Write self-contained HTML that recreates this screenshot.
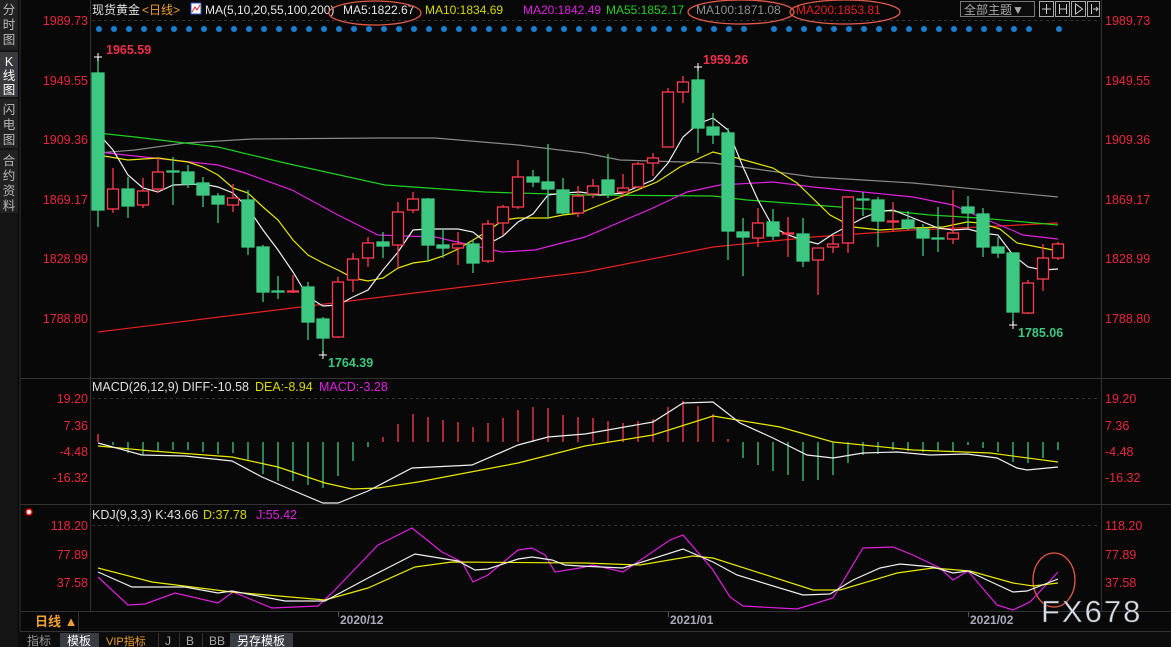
<!DOCTYPE html>
<html><head><meta charset="utf-8"><style>
html,body{margin:0;padding:0;background:#080808;width:1171px;height:647px;overflow:hidden}
svg{display:block}
text{font-family:"Liberation Sans","Noto Sans CJK SC",sans-serif}
</style></head><body>
<svg width="1171" height="647" viewBox="0 0 1171 647" xmlns="http://www.w3.org/2000/svg">
<rect width="1171" height="647" fill="#080808"/>
<rect x="0" y="0" width="18" height="647" fill="#141414"/>
<rect x="0" y="0" width="18" height="50" fill="#222"/>
<rect x="0" y="52" width="18" height="45" fill="#3a3a3e"/>
<rect x="0" y="99" width="18" height="49" fill="#222"/>
<rect x="0" y="150" width="18" height="63" fill="#222"/>
<g fill="#b8b8b8" font-size="12.5" text-anchor="middle">
<text x="9" y="14">分</text><text x="9" y="29">时</text><text x="9" y="44">图</text>
<text x="9" y="66" fill="#fff">K</text><text x="9" y="80" fill="#fff">线</text><text x="9" y="94" fill="#fff">图</text>
<text x="9" y="114">闪</text><text x="9" y="129">电</text><text x="9" y="144">图</text>
<text x="9" y="165">合</text><text x="9" y="180">约</text><text x="9" y="195">资</text><text x="9" y="210">料</text>
</g>
<g stroke="#333" stroke-width="1">
<line x1="20" y1="0" x2="20" y2="631"/>
<line x1="90.5" y1="0" x2="90.5" y2="611"/>
<line x1="1101.5" y1="0" x2="1101.5" y2="611"/>
<line x1="20" y1="378.5" x2="1171" y2="378.5"/>
<line x1="20" y1="504.5" x2="1171" y2="504.5"/>
<line x1="20" y1="611.5" x2="1171" y2="611.5"/>
<line x1="20" y1="631.5" x2="1171" y2="631.5"/>
<line x1="78.5" y1="611" x2="78.5" y2="631"/>
</g>
<g stroke="#333" stroke-dasharray="3,3">
<line x1="92" y1="20.5" x2="1100" y2="20.5"/>
<line x1="92" y1="398.5" x2="1100" y2="398.5"/>
<line x1="92" y1="525.5" x2="1100" y2="525.5"/>
</g>
<g fill="#e8283c" font-size="12.5" text-anchor="end">
<text x="88" y="25">1989.73</text><text x="88" y="85">1949.55</text><text x="88" y="144">1909.36</text><text x="88" y="204">1869.17</text><text x="88" y="263">1828.99</text><text x="88" y="323">1788.80</text>
<text x="88" y="403">19.20</text><text x="88" y="430">7.36</text><text x="88" y="456">-4.48</text><text x="88" y="482">-16.32</text>
<text x="88" y="530">118.20</text><text x="88" y="559">77.89</text><text x="88" y="587">37.58</text>
</g>
<g fill="#e8283c" font-size="12.5">
<text x="1105" y="25">1989.73</text><text x="1105" y="85">1949.55</text><text x="1105" y="144">1909.36</text><text x="1105" y="204">1869.17</text><text x="1105" y="263">1828.99</text><text x="1105" y="323">1788.80</text>
<text x="1105" y="403">19.20</text><text x="1105" y="430">7.36</text><text x="1105" y="456">-4.48</text><text x="1105" y="482">-16.32</text>
<text x="1105" y="530">118.20</text><text x="1105" y="559">77.89</text><text x="1105" y="587">37.58</text>
</g>
<g font-size="12">
<text x="92" y="14" fill="#e0e0e0">现货黄金</text>
<text x="142" y="14" fill="#f0a030">&lt;日线&gt;</text>
<rect x="191" y="3" width="10" height="11" fill="#fff" stroke="#3050c0"/>
<polyline points="192,12 195,7 197,10 200,5" fill="none" stroke="#e02020"/>
<text x="205" y="14" fill="#e8e8e8">MA(5,10,20,55,100,200)</text>
<text x="343" y="14" fill="#e8e8e8">MA5:1822.67</text>
<text x="425" y="14" fill="#d8d800">MA10:1834.69</text>
<text x="523" y="14" fill="#e020e0">MA20:1842.49</text>
<text x="606" y="14" fill="#20d020">MA55:1852.17</text>
<text x="696" y="14" fill="#909090">MA100:1871.08</text>
<text x="796" y="14" fill="#e82020">MA200:1853.81</text>
</g>
<g fill="none" stroke="#e05a48" stroke-width="1.3">
<ellipse cx="375" cy="13" rx="46" ry="12"/>
<ellipse cx="741" cy="12" rx="53" ry="12"/>
<ellipse cx="845" cy="12" rx="55" ry="12"/>
<ellipse cx="1054" cy="580" rx="21" ry="27"/>
</g>
<rect x="960.5" y="1.5" width="74" height="15" fill="#0c0c0c" stroke="#777"/>
<text x="964" y="14" fill="#aaa" font-size="12">全部主题▼</text>
<g fill="#0c0c0c" stroke="#aaa">
<rect x="1039.5" y="1.5" width="14" height="15"/><rect x="1055.5" y="1.5" width="14" height="15"/><rect x="1071.5" y="1.5" width="14" height="15"/><rect x="1087.5" y="1.5" width="12" height="15"/>
</g>
<g stroke="#ccc" fill="none">
<path d="M1046.5 4v10M1042 9h9"/><path d="M1059.5 4v10M1066.5 4v10M1059 9h8"/><path d="M1075.5 4v10l7-5z"/><path d="M1091.5 4v10M1093 9h5M1096 7l2 2-2 2"/>
</g>
<g fill="#1a7fd0">
<circle cx="99" cy="29" r="3"/><circle cx="114" cy="29" r="3"/><circle cx="129" cy="29" r="3"/><circle cx="144" cy="29" r="3"/><circle cx="159" cy="29" r="3"/><circle cx="174" cy="29" r="3"/><circle cx="189" cy="29" r="3"/><circle cx="204" cy="29" r="3"/><circle cx="219" cy="29" r="3"/><circle cx="234" cy="29" r="3"/><circle cx="249" cy="29" r="3"/><circle cx="264" cy="29" r="3"/><circle cx="279" cy="29" r="3"/><circle cx="294" cy="29" r="3"/><circle cx="309" cy="29" r="3"/><circle cx="324" cy="29" r="3"/><circle cx="339" cy="29" r="3"/><circle cx="354" cy="29" r="3"/><circle cx="369" cy="29" r="3"/><circle cx="384" cy="29" r="3"/><circle cx="399" cy="29" r="3"/><circle cx="414" cy="29" r="3"/><circle cx="429" cy="29" r="3"/><circle cx="444" cy="29" r="3"/><circle cx="459" cy="29" r="3"/><circle cx="474" cy="29" r="3"/><circle cx="489" cy="29" r="3"/><circle cx="504" cy="29" r="3"/><circle cx="519" cy="29" r="3"/><circle cx="534" cy="29" r="3"/><circle cx="549" cy="29" r="3"/><circle cx="564" cy="29" r="3"/><circle cx="579" cy="29" r="3"/><circle cx="594" cy="29" r="3"/><circle cx="609" cy="29" r="3"/><circle cx="624" cy="29" r="3"/><circle cx="639" cy="29" r="3"/><circle cx="654" cy="29" r="3"/><circle cx="669" cy="29" r="3"/><circle cx="684" cy="29" r="3"/><circle cx="699" cy="29" r="3"/><circle cx="714" cy="29" r="3"/><circle cx="729" cy="29" r="3"/><circle cx="744" cy="29" r="3"/><circle cx="774" cy="29" r="3"/><circle cx="789" cy="29" r="3"/><circle cx="804" cy="29" r="3"/><circle cx="819" cy="29" r="3"/><circle cx="834" cy="29" r="3"/><circle cx="849" cy="29" r="3"/><circle cx="864" cy="29" r="3"/><circle cx="879" cy="29" r="3"/><circle cx="894" cy="29" r="3"/><circle cx="909" cy="29" r="3"/><circle cx="924" cy="29" r="3"/><circle cx="939" cy="29" r="3"/><circle cx="954" cy="29" r="3"/><circle cx="969" cy="29" r="3"/><circle cx="984" cy="29" r="3"/><circle cx="999" cy="29" r="3"/><circle cx="1014" cy="29" r="3"/><circle cx="1029" cy="29" r="3"/><circle cx="1059" cy="29" r="3"/>
</g>
<g fill="none" stroke-width="1.2">
<polyline stroke="#e82020" points="98,332 585,272 713,247 813,237 913,230 980,227 1058,223"/>
<polyline stroke="#888" points="98,153 135,150 185,143 252,139 385,138 435,138 518,145 585,153 620,160 713,163 813,177 913,183 1058,197"/>
<polyline stroke="#20d020" points="98,133 135,137 218,147 285,163 385,185 485,192 585,195 713,196 747,200 813,205 880,210 930,215 980,218 1058,225"/>
<polyline stroke="#e020e0" points="98,152 218,165 245,173 292,190 338,215 378,235 435,237 502,252 535,250 585,237 653,208 687,192 720,185 773,182 813,187 863,192 913,197 953,205 980,217 1007,228 1023,235 1058,239"/>
<polyline stroke="#e8e800" points="98,155 128,160 158,158 188,162 203,167 218,175 233,188 248,193 263,207 278,220 293,240 308,255 323,263 338,270 353,278 368,281 383,278 398,268 413,263 428,261 443,256 458,249 473,240 488,231 503,220 518,218 548,218 563,215 580,213 620,197 657,182 680,167 713,152 737,158 773,168 797,183 830,215 853,227 880,230 913,228 943,227 967,222 980,223 1000,229 1017,243 1058,251"/>
<polyline stroke="#f0f0f0" points="98,133 113,150 128,175 143,188 158,192 173,185 203,184 218,187 233,193 248,208 263,230 278,250 293,272 308,297 323,306 338,305 353,297 368,290 383,270 398,252 413,230 428,229 458,229 473,232 488,244 503,236 518,222 533,214 548,195 563,193 580,192 600,195 623,193 653,180 668,163 683,137 698,124 713,118 728,130 743,167 758,200 773,227 788,235 803,240 818,244 833,234 848,226 863,218 878,212 893,210 908,216 923,222 938,228 953,230 968,229 983,233 998,235 1013,255 1028,267 1043,270 1058,269"/>
</g>
<g stroke-width="1.3">
<g stroke="#3cc880" fill="#3cc880">
<line x1="98" y1="57" x2="98" y2="227"/><rect x="92" y="73" width="12" height="137"/>
<line x1="128" y1="177" x2="128" y2="218"/><rect x="122" y="189" width="12" height="17"/>
<line x1="173" y1="157" x2="173" y2="205"/><rect x="167" y="171" width="12" height="1"/>
<line x1="188" y1="165" x2="188" y2="188"/><rect x="182" y="172" width="12" height="12"/>
<line x1="203" y1="177" x2="203" y2="207"/><rect x="197" y="183" width="12" height="12"/>
<line x1="218" y1="193" x2="218" y2="223"/><rect x="212" y="196" width="12" height="8"/>
<line x1="248" y1="190" x2="248" y2="255"/><rect x="242" y="200" width="12" height="47"/>
<line x1="263" y1="245" x2="263" y2="302"/><rect x="257" y="247" width="12" height="45"/>
<line x1="278" y1="276" x2="278" y2="299"/><rect x="272" y="291" width="12" height="1"/>
<line x1="308" y1="282" x2="308" y2="340"/><rect x="302" y="287" width="12" height="35"/>
<line x1="323" y1="317" x2="323" y2="355"/><rect x="317" y="319" width="12" height="19"/>
<line x1="383" y1="232" x2="383" y2="258"/><rect x="377" y="242" width="12" height="4"/>
<line x1="428" y1="198" x2="428" y2="262"/><rect x="422" y="199" width="12" height="46"/>
<line x1="443" y1="228" x2="443" y2="258"/><rect x="437" y="245" width="12" height="3"/>
<line x1="473" y1="240" x2="473" y2="273"/><rect x="467" y="244" width="12" height="19"/>
<line x1="533" y1="170" x2="533" y2="187"/><rect x="527" y="177" width="12" height="5"/>
<line x1="548" y1="144" x2="548" y2="219"/><rect x="542" y="182" width="12" height="7"/>
<line x1="563" y1="178" x2="563" y2="215"/><rect x="557" y="190" width="12" height="23"/>
<line x1="608" y1="154" x2="608" y2="198"/><rect x="602" y="180" width="12" height="14"/>
<line x1="698" y1="67" x2="698" y2="153"/><rect x="692" y="80" width="12" height="48"/>
<line x1="713" y1="113" x2="713" y2="144"/><rect x="707" y="127" width="12" height="8"/>
<line x1="728" y1="128" x2="728" y2="260"/><rect x="722" y="133" width="12" height="98"/>
<line x1="743" y1="218" x2="743" y2="276"/><rect x="737" y="232" width="12" height="5"/>
<line x1="773" y1="209" x2="773" y2="240"/><rect x="767" y="222" width="12" height="14"/>
<line x1="803" y1="218" x2="803" y2="267"/><rect x="797" y="234" width="12" height="27"/>
<line x1="863" y1="192" x2="863" y2="216"/><rect x="857" y="199" width="12" height="1"/>
<line x1="878" y1="197" x2="878" y2="247"/><rect x="872" y="200" width="12" height="21"/>
<line x1="908" y1="211" x2="908" y2="230"/><rect x="902" y="220" width="12" height="8"/>
<line x1="923" y1="224" x2="923" y2="256"/><rect x="917" y="229" width="12" height="9"/>
<line x1="938" y1="207" x2="938" y2="252"/><rect x="932" y="238" width="12" height="1"/>
<line x1="968" y1="196" x2="968" y2="228"/><rect x="962" y="207" width="12" height="6"/>
<line x1="983" y1="208" x2="983" y2="257"/><rect x="977" y="214" width="12" height="33"/>
<line x1="998" y1="237" x2="998" y2="258"/><rect x="992" y="247" width="12" height="6"/>
<line x1="1013" y1="253" x2="1013" y2="325"/><rect x="1007" y="253" width="12" height="59"/>
</g>
<g stroke="#ff3b50" fill="#080808">
<line x1="113" y1="168" x2="113" y2="213"/><rect x="107.5" y="189" width="11" height="20"/>
<line x1="143" y1="178" x2="143" y2="208"/><rect x="137.5" y="191" width="11" height="14"/>
<line x1="158" y1="158" x2="158" y2="193"/><rect x="152.5" y="172" width="11" height="17"/>
<line x1="233" y1="184" x2="233" y2="212"/><rect x="227.5" y="198" width="11" height="7"/>
<line x1="293" y1="275" x2="293" y2="293"/><rect x="287.5" y="291" width="11" height="1"/>
<line x1="338" y1="277" x2="338" y2="338"/><rect x="332.5" y="282" width="11" height="55"/>
<line x1="353" y1="253" x2="353" y2="292"/><rect x="347.5" y="259" width="11" height="21"/>
<line x1="368" y1="237" x2="368" y2="267"/><rect x="362.5" y="243" width="11" height="15"/>
<line x1="398" y1="202" x2="398" y2="268"/><rect x="392.5" y="212" width="11" height="33"/>
<line x1="413" y1="192" x2="413" y2="213"/><rect x="407.5" y="199" width="11" height="11"/>
<line x1="458" y1="232" x2="458" y2="265"/><rect x="452.5" y="244" width="11" height="4"/>
<line x1="488" y1="220" x2="488" y2="263"/><rect x="482.5" y="224" width="11" height="37"/>
<line x1="503" y1="205" x2="503" y2="235"/><rect x="497.5" y="207" width="11" height="16"/>
<line x1="518" y1="160" x2="518" y2="209"/><rect x="512.5" y="177" width="11" height="30"/>
<line x1="578" y1="186" x2="578" y2="217"/><rect x="572.5" y="196" width="11" height="17"/>
<line x1="593" y1="179" x2="593" y2="198"/><rect x="587.5" y="186" width="11" height="8"/>
<line x1="623" y1="174" x2="623" y2="197"/><rect x="617.5" y="188" width="11" height="4"/>
<line x1="638" y1="162" x2="638" y2="188"/><rect x="632.5" y="164" width="11" height="23"/>
<line x1="653" y1="153" x2="653" y2="176"/><rect x="647.5" y="158" width="11" height="5"/>
<line x1="668" y1="88" x2="668" y2="147"/><rect x="662.5" y="92" width="11" height="55"/>
<line x1="683" y1="76" x2="683" y2="103"/><rect x="677.5" y="82" width="11" height="10"/>
<line x1="758" y1="208" x2="758" y2="247"/><rect x="752.5" y="223" width="11" height="15"/>
<line x1="788" y1="217" x2="788" y2="257"/><rect x="782.5" y="233" width="11" height="1"/>
<line x1="818" y1="248" x2="818" y2="295"/><rect x="812.5" y="248" width="11" height="12"/>
<line x1="833" y1="235" x2="833" y2="253"/><rect x="827.5" y="244" width="11" height="3"/>
<line x1="848" y1="196" x2="848" y2="253"/><rect x="842.5" y="197" width="11" height="46"/>
<line x1="893" y1="202" x2="893" y2="232"/><rect x="887.5" y="221" width="11" height="1"/>
<line x1="953" y1="190" x2="953" y2="244"/><rect x="947.5" y="233" width="11" height="6"/>
<line x1="1028" y1="280" x2="1028" y2="314"/><rect x="1022.5" y="283" width="11" height="30"/>
<line x1="1043" y1="244" x2="1043" y2="291"/><rect x="1037.5" y="258" width="11" height="21"/>
<line x1="1058" y1="242" x2="1058" y2="260"/><rect x="1052.5" y="244" width="11" height="14"/>
</g>
</g>
<g stroke="#fff" stroke-width="1">
<path d="M94 57h8M98 53v8"/><path d="M694 67h8M698 63v8"/><path d="M319 355h8M323 351v8"/><path d="M1009 325h8M1013 321v8"/>
</g>
<g font-size="12.5" font-weight="bold">
<text x="106" y="54" fill="#f0304a">1965.59</text>
<text x="703" y="64" fill="#f0304a">1959.26</text>
<text x="328" y="367" fill="#3cc880">1764.39</text>
<text x="1018" y="337" fill="#3cc880">1785.06</text>
</g>
<g font-size="12.5">
<text x="92" y="391" fill="#e0e0e0">MACD(26,12,9) DIFF:-10.58</text>
<text x="255" y="391" fill="#d8d800">DEA:-8.94</text>
<text x="319" y="391" fill="#e020e0">MACD:-3.28</text>
</g>
<g stroke-width="1.3">
<g stroke="#ff3b50">
<path d="M98 442V434M383 442V437M398 442V424M413 442V414M428 442V417M443 442V420M458 442V422M473 442V427M488 442V423M503 442V418M518 442V410M533 442V407M548 442V408M563 442V415M578 442V417M593 442V418M608 442V421M623 442V423M638 442V421M653 442V419M668 442V407M683 442V401M698 442V406M713 442V414M728 442V439"/>
</g>
<g stroke="#3cc880">
<path d="M113 442V445M128 442V453M143 442V455M158 442V452M173 442V450M188 442V450M203 442V452M218 442V454M233 442V453M248 442V460M263 442V474M278 442V481M293 442V481M308 442V485M323 442V488M338 442V476M353 442V461M368 442V447M743 442V458M758 442V465M773 442V471M788 442V475M803 442V481M818 442V480M833 442V475M848 442V463M863 442V455M878 442V454M893 442V450M908 442V451M923 442V452M938 442V451M953 442V451M968 442V445M983 442V448M998 442V452M1013 442V462M1028 442V463M1043 442V458M1058 442V450"/>
</g>
</g>
<g fill="none" stroke-width="1.2">
<polyline stroke="#e8e800" points="98,446 152,451 232,457 278,467 325,483 352,489 378,488 418,482 518,463 585,446 653,435 713,416 780,427 833,442 913,450 990,453 1058,462"/>
<polyline stroke="#f0f0f0" points="98,443 142,455 185,456 232,461 262,477 292,490 323,503 338,503 368,491 412,468 472,465 518,445 548,437 585,434 653,422 683,403 713,402 740,423 773,438 807,455 833,458 863,453 897,452 930,455 967,454 997,458 1017,468 1027,470 1058,467"/>
</g>
<circle cx="29" cy="512" r="3" fill="#fff" stroke="#e00" stroke-width="1.5"/>
<g font-size="12.5">
<text x="92" y="519" fill="#e0e0e0">KDJ(9,3,3) K:43.66</text>
<text x="203" y="519" fill="#d8d800">D:37.78</text>
<text x="256" y="519" fill="#e020e0">J:55.42</text>
</g>
<g fill="none" stroke-width="1.2">
<polyline stroke="#e020e0" points="98,577 128,605 145,604 175,593 218,603 233,592 272,608 318,606 332,593 378,545 412,528 442,552 462,562 473,582 488,575 518,550 532,548 545,555 555,572 580,568 593,565 623,572 670,540 683,535 713,570 730,597 743,606 797,609 833,598 863,548 893,547 913,555 940,568 953,580 968,571 997,605 1013,610 1030,602 1058,572"/>
<polyline stroke="#e8e800" points="98,568 152,582 232,592 325,600 368,588 415,567 452,562 585,563 640,565 693,556 713,558 813,590 840,590 897,573 933,568 970,571 1013,583 1033,586 1058,583"/>
<polyline stroke="#f0f0f0" points="98,572 132,587 185,587 218,593 232,591 285,601 325,601 368,578 415,554 458,561 475,570 488,569 518,559 532,557 552,560 565,565 580,566 623,568 683,549 713,562 737,575 803,595 830,594 853,580 880,568 900,564 933,567 953,573 968,571 987,580 1013,592 1027,591 1058,579"/>
</g>
<text x="35" y="626" fill="#f0a030" font-size="13" font-weight="bold">日线 ▲</text>
<g stroke="#555"><path d="M338.5 612v5M668.5 612v5M968.5 612v5"/></g>
<g fill="#aab" font-size="12" font-weight="bold">
<text x="340" y="624">2020/12</text><text x="670" y="624">2021/01</text><text x="970" y="624">2021/02</text>
</g>
<text x="1041" y="622" fill="#d8dce6" font-size="31" letter-spacing="2" stroke="#333" stroke-width="0.5">FX678</text>
<rect x="18" y="632" width="1153" height="15" fill="#0c0c0c"/>
<rect x="60" y="633" width="39" height="14" fill="#3a3c44"/>
<rect x="230" y="633" width="63" height="14" fill="#3a3c44"/>
<g stroke="#333"><path d="M158.5 633v14M179.5 633v14M202.5 633v14"/></g>
<g font-size="12">
<text x="27" y="645" fill="#999">指标</text>
<text x="67" y="645" fill="#fff">模板</text>
<text x="106" y="645" fill="#f0a030" font-size="11">VIP指标</text>
<text x="165" y="645" fill="#aaa">J</text>
<text x="186" y="645" fill="#aaa">B</text>
<text x="209" y="645" fill="#aaa">BB</text>
<text x="237" y="645" fill="#fff">另存模板</text>
</g>
</svg>
</body></html>
